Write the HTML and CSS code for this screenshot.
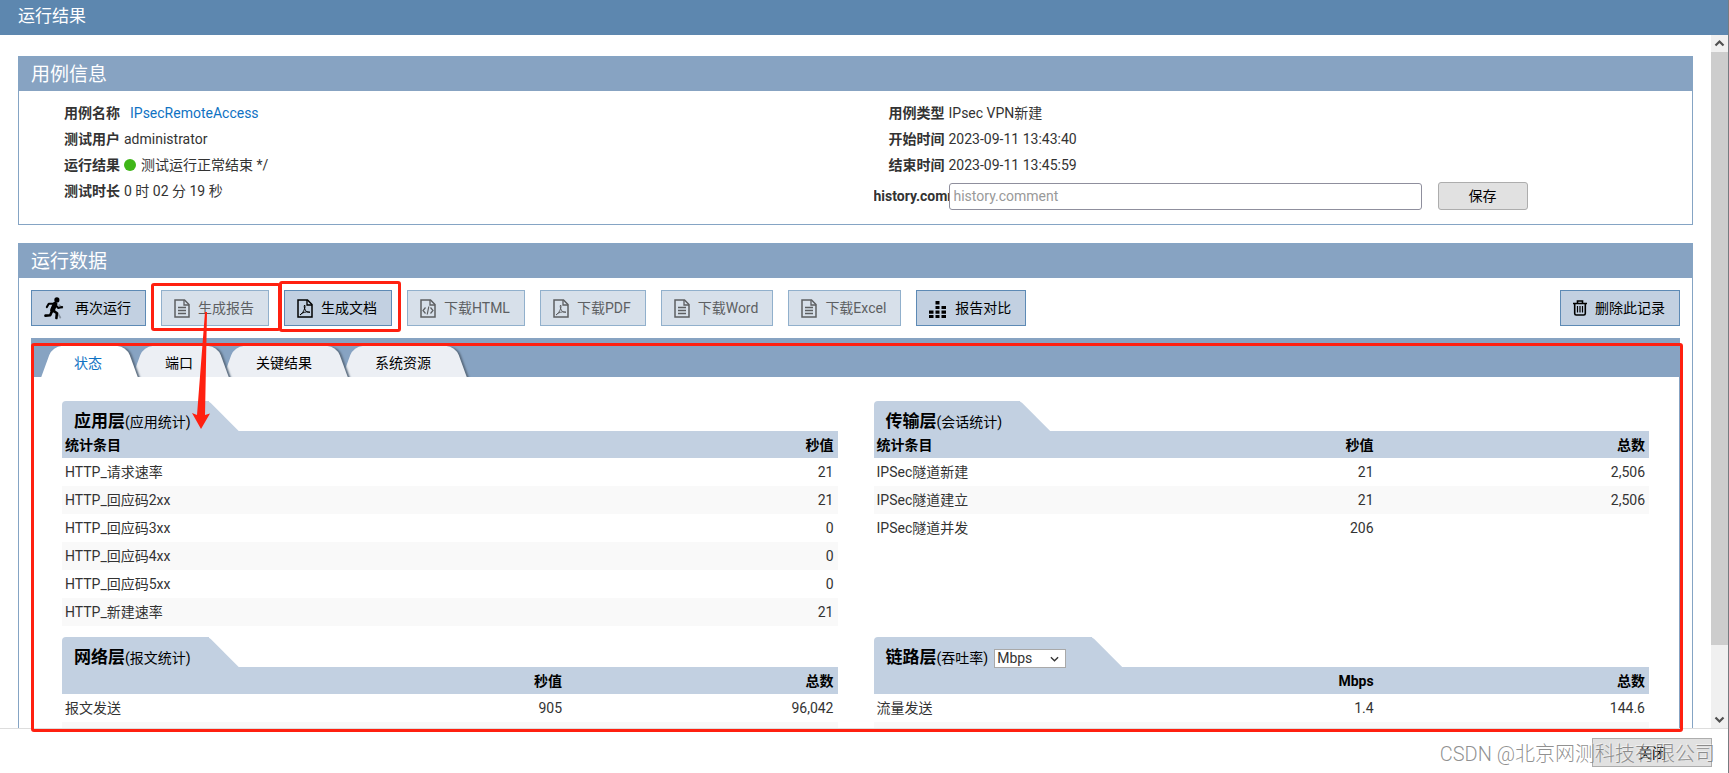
FILE: index.html
```html
<!DOCTYPE html>
<html lang="zh-CN">
<head>
<meta charset="utf-8">
<title>运行结果</title>
<link rel="stylesheet" href="styles.css">
</head>
<body>
<svg class="defs" aria-hidden="true">
  <symbol id="i-doc" viewBox="0 0 16 19"><path d="M1 1h9.5L15 5.5V18H1z" fill="none" stroke="currentColor" stroke-width="1.5"/><path d="M10 1v5h5" fill="none" stroke="currentColor" stroke-width="1.3"/><path d="M4 8.5h8M4 11.5h8M4 14.5h8" stroke="currentColor" stroke-width="1.3"/></symbol>
  <symbol id="i-pdf" viewBox="0 0 16 19"><path d="M1 1h9.5L15 5.500V18H1z" fill="none" stroke="currentColor" stroke-width="1.5"/><path d="M10 1v5h5" fill="none" stroke="currentColor" stroke-width="1.3"/><path d="M7.500 6c-.8 2 .3 5 2 6.500 1 .8 2.500 1 3.500.7-2-.8-5-.3-7.500.8-1 .5-2 1.200-2.500 2 2-1 4-4 4.800-7 .3-1 .3-2.500-.3-3z" fill="none" stroke="currentColor"/></symbol>
  <symbol id="i-code" viewBox="0 0 16 19"><path d="M1 1h9.5L15 5.500V18H1z" fill="none" stroke="currentColor" stroke-width="1.5"/><path d="M10 1v5h5" fill="none" stroke="currentColor" stroke-width="1.3"/><path d="M5.500 8.500L3 11.500l2.500 3M10.500 8.500l2.500 3-2.500 3M8.800 7.500l-1.600 8" fill="none" stroke="currentColor" stroke-width="1.2"/></symbol>
</svg>
<div class="window">
  <header class="titlebar">运行结果</header>
  <div class="viewport">
    <main class="page">
      <section class="panel">
        <h2 class="panel-title">用例信息</h2>
        <div class="info">
          <dl class="info-col">
            <div class="row"><dt>用例名称</dt><dd><a class="case-link" href="#">IPsecRemoteAccess</a></dd></div>
            <div class="row"><dt>测试用户</dt><dd>administrator</dd></div>
            <div class="row"><dt>运行结果</dt><dd class="result"><span class="dot"></span>测试运行正常结束 */</dd></div>
            <div class="row"><dt>测试时长</dt><dd>0 时 02 分 19 秒</dd></div>
          </dl>
          <div class="info-col">
            <dl class="list">
              <div class="row"><dt>用例类型</dt><dd>IPsec VPN新建</dd></div>
              <div class="row"><dt>开始时间</dt><dd>2023-09-11 13:43:40</dd></div>
              <div class="row"><dt>结束时间</dt><dd>2023-09-11 13:45:59</dd></div>
            </dl>
            <div class="comment">
              <label for="comment">history.comment</label>
              <input id="comment" type="text" placeholder="history.comment">
              <button class="plain save" type="button">保存</button>
            </div>
          </div>
        </div>
      </section>

      <section class="panel">
        <h2 class="panel-title">运行数据</h2>
        <div class="toolbar">
          <button class="tool run" type="button"><svg class="runner" viewBox="0 0 22 24"><g fill="none" stroke="#8793a0" stroke-linecap="round" stroke-linejoin="round"><path d="M16 9l3 3M14 17l3 5" stroke-width="2"/></g><circle cx="13.500" cy="3.500" r="2.700"/><g fill="none" stroke="currentColor" stroke-linecap="round" stroke-linejoin="round"><path d="M11.500 8L9 14" stroke-width="5"/><path d="M10.500 7.500L5 7.500 3 11M12.500 9.500l2.500 2.500 4-1" stroke-width="2.200"/><path d="M9.500 14.500l4 3L13 22.500M8.500 15l-2 4.500-5 .5" stroke-width="2.700"/></g></svg>再次运行</button>
          <button class="tool" type="button" disabled><svg class="ico"><use href="#i-doc"/></svg>生成报告</button>
          <button class="tool" type="button"><svg class="ico"><use href="#i-pdf"/></svg>生成文档</button>
          <button class="tool" type="button" disabled><svg class="ico"><use href="#i-code"/></svg>下载HTML</button>
          <button class="tool" type="button" disabled><svg class="ico"><use href="#i-pdf"/></svg>下载PDF</button>
          <button class="tool" type="button" disabled><svg class="ico"><use href="#i-doc"/></svg>下载Word</button>
          <button class="tool" type="button" disabled><svg class="ico"><use href="#i-doc"/></svg>下载Excel</button>
          <button class="tool" type="button"><svg class="bars" viewBox="0 0 18 17"><path d="M6.500 0h4v3.500h-4zM6.500 5h4v3h-4zM12.500 5h4.500v3h-4.500zM0 9.500h4.500v3.200H0zM6.500 9.500h4v3.200h-4zM12.500 9.500h4.500v3.200h-4.500zM0 14h4.500v3H0zM6.500 14h4v3h-4zM12.500 14h4.500v3h-4.500z" fill="currentColor"/></svg>报告对比</button>
          <button class="tool delete" type="button"><svg class="trash" viewBox="0 0 14 16"><path d="M0 3.500h14M4.500 3V1h5v2M1.700 4v9.500q0 1.500 1.500 1.500h7.600q1.500 0 1.500-1.500V4" fill="none" stroke="currentColor" stroke-width="1.600"/><path d="M4.500 6v6.500M7 6v6.500M9.500 6v6.500" stroke="currentColor" stroke-width="1.200"/></svg>删除此记录</button>
        </div>
        <div class="tabbox">
          <nav class="tabs">
            <a class="tab active" href="#"><span>状态</span></a>
            <a class="tab" href="#"><span>端口</span></a>
            <a class="tab" href="#"><span>关键结果</span></a>
            <a class="tab" href="#"><span>系统资源</span></a>
          </nav>
          <div class="stats">
            <div class="stat">
              <div class="cap"><b>应用层</b>(应用统计)</div>
              <table>
                <thead><tr><th>统计条目</th><th class="total">秒值</th></tr></thead>
                <tbody>
                  <tr><td>HTTP_请求速率</td><td>21</td></tr>
                  <tr><td>HTTP_回应码2xx</td><td>21</td></tr>
                  <tr><td>HTTP_回应码3xx</td><td>0</td></tr>
                  <tr><td>HTTP_回应码4xx</td><td>0</td></tr>
                  <tr><td>HTTP_回应码5xx</td><td>0</td></tr>
                  <tr><td>HTTP_新建速率</td><td>21</td></tr>
                </tbody>
              </table>
            </div>
            <div class="stat">
              <div class="cap"><b>传输层</b>(会话统计)</div>
              <table>
                <thead><tr><th>统计条目</th><th>秒值</th><th class="total">总数</th></tr></thead>
                <tbody>
                  <tr><td>IPSec隧道新建</td><td>21</td><td>2,506</td></tr>
                  <tr><td>IPSec隧道建立</td><td>21</td><td>2,506</td></tr>
                  <tr><td>IPSec隧道并发</td><td>206</td><td></td></tr>
                </tbody>
              </table>
            </div>
            <div class="stat">
              <div class="cap"><b>网络层</b>(报文统计)</div>
              <table>
                <thead><tr><th></th><th>秒值</th><th class="total">总数</th></tr></thead>
                <tbody>
                  <tr><td>报文发送</td><td>905</td><td>96,042</td></tr>
                  <tr><td></td><td></td><td></td></tr>
                </tbody>
              </table>
            </div>
            <div class="stat">
              <div class="cap cap-wide"><b>链路层</b><label for="unit">(吞吐率)</label><span class="unit"><select id="unit"><option>Mbps</option></select><svg viewBox="0 0 10 6"><path d="M1 1l4 4 4-4" fill="none" stroke="#333" stroke-width="1.500"/></svg></span></div>
              <table>
                <thead><tr><th></th><th>Mbps</th><th class="total">总数</th></tr></thead>
                <tbody>
                  <tr><td>流量发送</td><td>1.4</td><td>144.6</td></tr>
                  <tr><td></td><td></td><td></td></tr>
                </tbody>
              </table>
            </div>
          </div>
        </div>
      </section>
    </main>
    <div class="scrollbar">
      <svg viewBox="0 0 17 17"><path d="M4.500 10.500l4-4 4 4" fill="none" stroke="#505050" stroke-width="2.200"/></svg>
      <div class="track"><div class="thumb"></div></div>
      <svg viewBox="0 0 17 17"><path d="M4.500 6.500l4 4 4-4" fill="none" stroke="#505050" stroke-width="2.200"/></svg>
    </div>
  </div>
  <footer class="footer">
    <button class="plain close" type="button">关闭</button>
    <span class="watermark">CSDN @北京网测科技有限公司</span>
  </footer>
  <div class="mark mark-report"></div>
  <div class="mark mark-doc"></div>
  <div class="mark mark-data"></div>
  <svg class="arrow" viewBox="0 0 18 117"><path d="M13 0h2L13 103l5-1.500L9 117 0 101l5 2z" fill="#ff2010"/></svg>
</div>
</body>
</html>
```
FILE: styles.css
```css
* { box-sizing: border-box; }
body {
  margin: 0;
  font: 14px/20px Roboto, "Noto Sans CJK SC", sans-serif;
  color: #333;
  background: #fff;
}
button, input, select { font: inherit; }
h2, dl, dd { margin: 0; }
a { text-decoration: none; }
.defs { display: none; }

.window {
  position: relative;
  display: flex;
  flex-direction: column;
  height: 100vh;
  overflow: hidden;
  border-right: 1px solid #777b80;
}
.titlebar {
  flex: none;
  height: 35px;
  padding-left: 18px;
  font-size: 17px;
  line-height: 32px;
  color: #fff;
  background: #5d87af;
}
.viewport {
  flex: 1;
  min-height: 0;
  display: flex;
  overflow: hidden;
}
.page {
  flex: 1;
  padding: 21px 18px 0;
}
.panel {
  margin-bottom: 18px;
  border: 1px solid #85a4c4;
}
.panel-title {
  height: 34px;
  padding-left: 12px;
  font-size: 19px;
  font-weight: 400;
  line-height: 35px;
  color: #fff;
  background: #87a3c2;
}

.info {
  display: grid;
  grid-template-columns: 1fr 1fr;
  padding: 9px 12px 14px;
}
.info-col { padding-left: 18px; }
.row { display: flex; height: 26px; line-height: 27px; }
.row dt {
  width: 75px;
  padding-right: 4px;
  text-align: right;
  font-weight: 700;
}
.case-link { padding-left: 6px; color: #0f72c3; }
.result { display: flex; align-items: center; }
.dot {
  width: 12px;
  height: 12px;
  margin-right: 5px;
  border-radius: 50%;
  background: #3fb618;
}
.comment { display: flex; align-items: center; padding-top: 4px; }
.comment label {
  width: 75px;
  overflow: hidden;
  font-weight: 700;
}
.comment input {
  flex: 0 1 473px;
  min-width: 0;
  height: 27px;
  padding: 0 4px;
  border: 1px solid #8f8f9d;
  border-radius: 3px;
  color: #333;
}
.comment input::placeholder { color: #999; opacity: 1; }
.plain {
  border: 1px solid #adadad;
  color: #000;
  background: #e1e1e1;
}
.save {
  width: 90px;
  height: 28px;
  margin-left: 16px;
  padding: 0;
  border-radius: 3px;
}

.toolbar {
  display: flex;
  gap: 15px;
  padding: 12px;
}
.tool {
  display: flex;
  align-items: center;
  gap: 8px;
  height: 36px;
  padding: 0 14px 0 12px;
  border: 1px solid #5d8ab5;
  color: #000;
  background: #c2d0e1;
}
.tool:disabled { border-color: #91b0cc; color: #5d5f62; background: #d7e0ea; }
.run { gap: 10px; }
.delete { margin-left: auto; }
.ico { width: 16px; height: 19px; }
.runner { width: 21px; height: 24px; }
.bars { width: 18px; height: 17px; margin-top: 3px; }
.trash { width: 14px; height: 16px; }

.tabbox {
  margin: 0 12px;
  border: 1px solid #87a3c2;
  border-top: 0;
}
.tabs {
  display: flex;
  isolation: isolate;
  padding: 8px 0 0 8px;
  overflow: hidden;
  background: #87a3c2;
}
.tab {
  position: relative;
  z-index: 1;
  height: 31px;
  padding: 0 29px 0 34px;
  line-height: 34px;
  color: #000;
  --fill: #eceff4;
}
.tab.active { z-index: 2; color: #0f72c3; --fill: #fff; }
.tab:nth-child(3) { z-index: 0; }
.tab:nth-child(4) { z-index: -1; }
.tab::before, .tab::after {
  content: "";
  position: absolute;
  top: 0;
  height: 36px;
  background: var(--fill);
}
.tab::before {
  left: 6px;
  right: 40px;
  border-radius: 9px 0 0 0;
  transform: skewX(-20deg);
}
.tab::after {
  left: 30px;
  right: -2px;
  border-radius: 0 9px 0 0;
  box-shadow: 3px 0 2px -1px #596b7e;
  transform: skewX(20deg);
}
.tab span { position: relative; z-index: 1; }

.stats {
  display: grid;
  grid-template-columns: 1fr 1fr;
  gap: 11px 36px;
  align-items: start;
  padding: 24px 30px;
}
.cap {
  position: relative;
  display: flex;
  align-items: baseline;
  width: max-content;
  height: 30px;
  padding: 10px 18px 0 12px;
  line-height: 20px;
  color: #000;
  background: #c2d0e1;
  border-radius: 4px 0 0 0;
}
.cap-wide { padding-right: 26px; }
.cap::after {
  content: "";
  position: absolute;
  left: calc(100% - 1px);
  top: 0;
  width: 31px;
  height: 30px;
  background: #c2d0e1;
  clip-path: polygon(0 0, 10% 7%, 100% 100%, 0 100%);
}
.cap b { font-size: 17px; }
.unit { position: relative; margin-left: 6px; }
.unit select {
  appearance: none;
  width: 72px;
  height: 19px;
  padding: 0 2px;
  border: 1px solid #a9a9a9;
  border-radius: 0;
  line-height: 17px;
  color: #333;
  background: #fff;
}
.unit svg {
  position: absolute;
  right: 7px;
  top: 8px;
  width: 9px;
  height: 6px;
}
table {
  width: 100%;
  table-layout: fixed;
  border-collapse: collapse;
}
th, td { height: 28px; padding: 0 4px; text-align: right; }
th { height: 27px; color: #000; background: #c2d0e1; }
th:first-child, td:first-child { padding-left: 3px; text-align: left; }
.total { width: 35%; }
tbody tr:nth-child(even) { background: #f9f9f9; }

.scrollbar {
  flex: none;
  display: flex;
  flex-direction: column;
  width: 17px;
  background: #f0f0f0;
}
.scrollbar svg { flex: none; width: 17px; height: 17px; }
.track { flex: 1; }
.thumb { height: 90%; background: #cdcdcd; }

.footer {
  position: relative;
  flex: none;
  height: 45px;
  padding: 9px 16px 0;
  border-top: 1px solid #ddd;
  text-align: right;
}
.close { width: 120px; height: 29px; }
.watermark {
  position: absolute;
  right: 13px;
  top: 10px;
  font-size: 20px;
  font-weight: 300;
  line-height: 30px;
  color: rgba(125, 125, 125, 0.85);
  text-shadow: -1px -1px 0 rgba(255, 255, 255, 0.5);
}

.mark {
  position: absolute;
  border: 3px solid #ff2010;
  border-radius: 3px;
}
.mark-report { left: 151px; top: 283px; width: 130px; height: 48px; }
.mark-doc { left: 279px; top: 281px; width: 122px; height: 51px; }
.mark-data { left: 31px; right: 45px; top: 343px; bottom: 41px; }
.arrow {
  position: absolute;
  left: 192px;
  top: 312px;
  width: 18px;
  height: 117px;
}
```
